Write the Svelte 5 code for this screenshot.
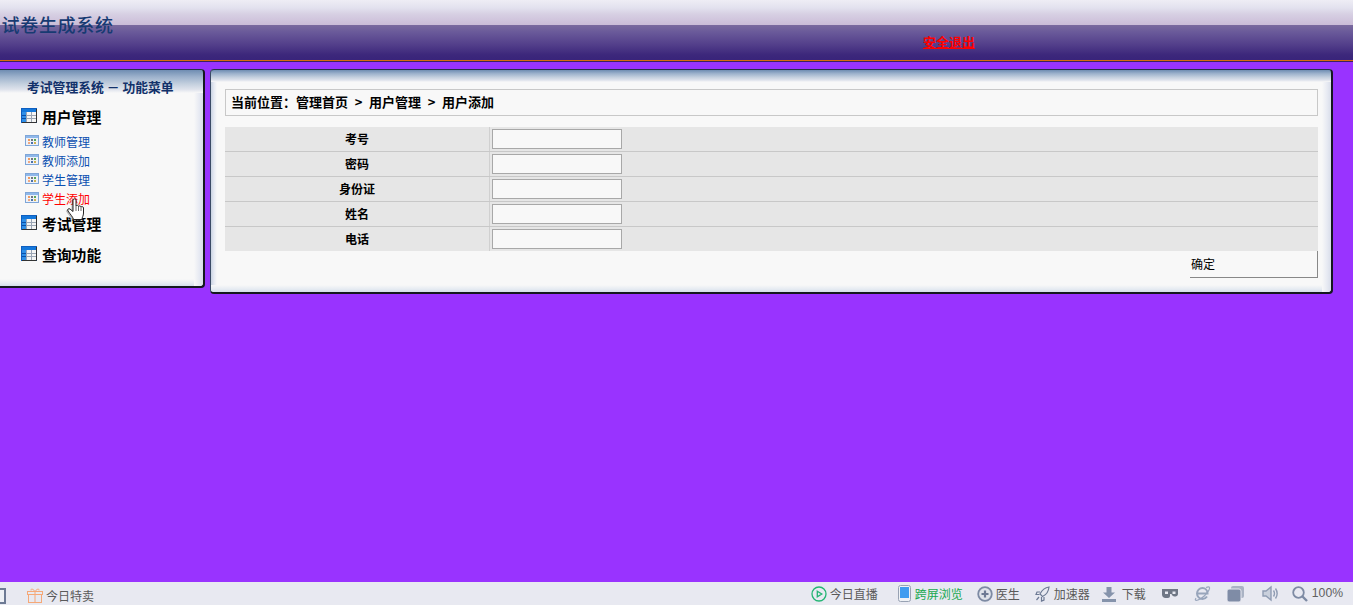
<script>
  const subs = [
    { label: '教师管理' },
    { label: '教师添加' },
    { label: '学生管理' },
    { label: '学生添加', active: true }
  ];
  const fields = ['考号', '密码', '身份证', '姓名', '电话'];
</script>

{#snippet bigIcon()}
  <svg class="big-icon" width="16" height="15" viewBox="0 0 16 15">
    <rect x="0.5" y="0.5" width="15" height="14" fill="#f4f4f4" stroke="#0f5fc0" />
    <rect x="1" y="1" width="14" height="3" fill="#1478dc" />
    <rect x="1" y="4" width="4" height="10" fill="#2f8fe8" />
    <path d="M1 7.5H15M1 10.5H15M5.5 4V14M10.5 4V14" stroke="#9aa5b5" stroke-width="1" />
    <path d="M1 7.5H5M1 10.5H5" stroke="#0b4fa8" stroke-width="1" />
    <path d="M15.5 1V14.5H1" stroke="#333" fill="none" />
  </svg>
{/snippet}

{#snippet smallIcon()}
  <svg class="small-icon" width="14" height="11" viewBox="0 0 14 11">
    <rect x="0.5" y="0.5" width="13" height="10" fill="#eef2f8" stroke="#7fa6d8" />
    <rect x="1" y="1" width="12" height="2" fill="#8fb8ea" />
    <rect x="3" y="4" width="2" height="2" fill="#f09a60" />
    <rect x="6" y="4" width="2" height="2" fill="#70757e" />
    <rect x="9" y="4" width="2" height="2" fill="#58a858" />
    <rect x="3" y="7" width="2" height="2" fill="#f0a880" />
    <rect x="6" y="7" width="2" height="2" fill="#4a70a8" />
    <rect x="9" y="7" width="2" height="2" fill="#d0b050" />
  </svg>
{/snippet}

<div class="page">
  <header class="top">
    <div class="title">试卷生成系统</div>
    <a class="logout" href="#logout">安全退出</a>
  </header>

  <main class="main">
    <aside class="panel side">
      <div class="side-title">考试管理系统 － 功能菜单</div>

      <div class="group">{@render bigIcon()}<span>用户管理</span></div>
      <ul class="subs">
        {#each subs as s}
          <li class:active={s.active}>{@render smallIcon()}<span>{s.label}</span></li>
        {/each}
      </ul>
      <div class="group second">{@render bigIcon()}<span>考试管理</span></div>
      <div class="group third">{@render bigIcon()}<span>查询功能</span></div>

      <svg class="hand" width="17" height="22" viewBox="0 0 17 22">
        <path d="M6 2C6 .5 9 .5 9 2V8C9.500 7 11.500 7 11.500 8.500C12 7.500 14 7.800 14 9C14.500 8.200 16.500 8.500 16.500 10V15C16.500 18 15 19 15 21.500H6.500C6 19 3 16 1 13C0 11.500 1.500 10 3 11L6 13.500Z" fill="#fff" stroke="#222" stroke-width="1" />
        <path d="M9 8V13M11.500 8.500V13M14 9V13" stroke="#444" stroke-width=".8" />
      </svg>
    </aside>

    <section class="panel content">
      <div class="crumb">当前位置：管理首页<span class="sep">&gt;</span>用户管理<span class="sep">&gt;</span>用户添加</div>
      <div class="rows">
        {#each fields as f}
          <div class="row">
            <div class="label">{f}</div>
            <div class="value"><input type="text" /></div>
          </div>
        {/each}
      </div>
      <div class="actions"><button type="button">确定</button></div>
    </section>
  </main>

  <footer class="status">
    <div class="left">
      <span class="stub"></span>
      <svg class="gift" width="16" height="15" viewBox="0 0 16 15" fill="none" stroke="#f5a878">
        <rect x="1.500" y="6.500" width="13" height="8" />
        <rect x=".5" y="3.500" width="15" height="3" />
        <path d="M8 3.500V14.500M8 3.500C6 .5 3.500 .5 4 2.500M8 3.500C10 .5 12.500 .5 12 2.500" />
      </svg>
      <span class="s-text">今日特卖</span>
    </div>
    <div class="right">
      <span class="item i1">
        <svg width="16" height="16" viewBox="0 0 16 16" fill="none" stroke="#22b573" stroke-width="1.300">
          <circle cx="8" cy="8" r="7" />
          <path d="M6.300 5.200L10.800 8L6.300 10.800Z" />
        </svg>
        <span>今日直播</span>
      </span>
      <span class="item i2">
        <svg width="13" height="17" viewBox="0 0 13 17">
          <rect x=".5" y=".5" width="12" height="16" rx="2" fill="#eef1f5" stroke="#98a2b3" />
          <rect x="2" y="2" width="9" height="11" fill="#3f9cf0" />
        </svg>
        <span class="green">跨屏浏览</span>
      </span>
      <span class="item i3">
        <svg width="16" height="16" viewBox="0 0 16 16">
          <circle cx="8" cy="8" r="6.800" fill="#dfe3ea" stroke="#7d8aa3" stroke-width="1.800" />
          <path d="M8 4.500V11.500M4.500 8H11.500" stroke="#6d7a94" stroke-width="2.200" />
        </svg>
        <span>医生</span>
      </span>
      <span class="item i4">
        <svg width="15" height="16" viewBox="0 0 15 16" fill="none" stroke="#6d7a94" stroke-width="1.200">
          <path d="M14 1C10 1.500 7 4 5 8L7.500 10.500C11 9 13.500 6 14 1Z" />
          <path d="M5 6H2L1 8.500H4.500M9 11V14L6.500 15V11M4 11L1.500 14" />
        </svg>
        <span>加速器</span>
      </span>
      <span class="item i5">
        <svg width="16" height="16" viewBox="0 0 16 16" fill="#8593ab">
          <path d="M5.500 1H10.500V6.500H14L8 12L2 6.500H5.500Z" />
          <rect x="1" y="13" width="14" height="3" />
        </svg>
        <span>下载</span>
      </span>
      <svg class="ic i6" width="16" height="11" viewBox="0 0 16 11" fill="#6f7785">
        <path d="M0 1H16V6C16 8 14 8.500 12.500 8.500C11 8.500 10 7.500 9.500 6H8V8C8 10 6 10 5 10H3.500C1.500 10 0 8.500 0 6.500Z" />
        <rect x="3" y="3.500" width="3" height="2.500" fill="#e8e9f1" />
        <rect x="10.500" y="3.500" width="3" height="2.500" fill="#e8e9f1" />
      </svg>
      <svg class="ic i7" width="17" height="17" viewBox="0 0 17 17" fill="none" stroke="#98a5bb" stroke-width="2">
        <path d="M3 8.500H13.500C13.500 5 11 3 8.500 3C5.500 3 3 5.500 3 8.500C3 11.500 5.500 14 8.500 14C10.500 14 12 13 13 11.500" />
        <path d="M2 13C.5 15 1.500 16 4 15C8 13.500 13 9 15 5C16.500 2 15 1 12 2.500" stroke-width="1.200" />
      </svg>
      <svg class="ic i8" width="17" height="16" viewBox="0 0 17 16">
        <rect x="4" y="0" width="13" height="12" rx="2" fill="#aab3c4" />
        <rect x="0" y="3" width="14" height="13" rx="2" fill="#7f8ca6" stroke="#e8e9f1" />
      </svg>
      <svg class="ic i9" width="16" height="17" viewBox="0 0 16 17" fill="none" stroke="#8f9cb3" stroke-width="1.400">
        <path d="M1 6V11H4L9 15V2L4 6Z" fill="#c9d0dc" />
        <path d="M11.500 5.500C12.800 7.500 12.800 9.500 11.500 11.500M13.500 3.500C15.500 6.500 15.500 10.500 13.500 13.500" />
      </svg>
      <span class="item i10">
        <svg width="16" height="16" viewBox="0 0 16 16" fill="none" stroke="#7d8aa3" stroke-width="1.800">
          <circle cx="6.500" cy="6.500" r="5.300" />
          <path d="M10.500 10.500L15 15" stroke-width="2.400" />
        </svg>
        <span class="zoom">100%</span>
      </span>
    </div>
  </footer>
</div>

<style>
  :global(body) {
    margin: 0;
    background: #9933ff;
  }
  .page {
    height: 605px;
    display: flex;
    flex-direction: column;
    overflow: hidden;
    font-family: "Noto Sans CJK SC", "Liberation Sans", sans-serif;
    font-size: 12px;
    line-height: 1;
    color: #000;
    background: #9933ff;
  }

  .top {
    height: 60px;
    box-sizing: content-box;
    border-bottom: 1px solid #d96a10;
    box-shadow: 0 1px 0 #3a2360;
    background: linear-gradient(
      180deg,
      #eeedf5 0,
      #e2e1ee 8px,
      #d7d0e3 14px,
      #cbbdd8 24.500px,
      #7a6a9e 25px,
      #6a5a9a 32px,
      #54408b 44px,
      #3c277b 55px,
      #39247a 60px
    );
  }
  .title {
    padding: 14px 0 0 1.500px;
    height: 20px;
    font-size: 18px;
    line-height: 20px;
    letter-spacing: 0.7px;
    font-weight: 500;
    color: #173a72;
  }
  .logout {
    display: block;
    width: 54px;
    margin: 0 0 0 923px;
    font-size: 13px;
    line-height: 15px;
    font-weight: 700;
    color: #f00;
    text-decoration: underline;
  }

  .main {
    flex: 1;
    min-height: 0;
    display: flex;
    align-items: flex-start;
    gap: 5px;
    padding-top: 8px;
  }
  .panel {
    position: relative;
    box-sizing: border-box;
    background:
      linear-gradient(180deg, #6f8db2 0, #9db2cc 30%, #c3cfde 60%, #dfe3ec 85%, #f8f8f8 100%) top / 100% var(--band) no-repeat,
      linear-gradient(90deg, #f8f8f8 0, #e6e9f2 60%, #d8dde9 100%) right / 9px 100% no-repeat,
      linear-gradient(180deg, #f8f8f8 0, #e6ebf2 60%, #d4deea 100%) bottom / 100% 7px no-repeat,
      linear-gradient(90deg, #c9d3e2 0, #e6e9f2 50%, #f8f8f8 100%) left / var(--edge) 100% no-repeat,
      #f8f8f8;
    border-top: 1px solid #26324a;
    border-right: 2px solid #14181f;
    border-bottom: 2px solid #14181f;
    border-radius: 4px;
  }

  .side {
    --band: 23px;
    --edge: 0px;
    width: 205px;
    height: 219px;
    border-top-left-radius: 0;
    border-bottom-left-radius: 0;
  }
  .side-title {
    padding: 9px 0 0 27px;
    height: 15px;
    font-size: 12.800px;
    line-height: 15px;
    font-weight: 700;
    color: #12316a;
  }
  .group {
    display: flex;
    align-items: center;
    gap: 5px;
    margin: 12px 0 0 21px;
    height: 22px;
    font-size: 14.800px;
    font-weight: 700;
    color: #000;
  }
  .big-icon {
    flex: none;
    margin-top: -3px;
  }
  .group.second {
    margin-top: 5px;
  }
  .group.third {
    margin-top: 9px;
  }
  .subs {
    list-style: none;
    margin: 4px 0 0 25px;
    padding: 0;
  }
  .subs li {
    display: flex;
    align-items: center;
    gap: 3px;
    height: 19px;
    color: #0a4fb0;
  }
  .subs li.active {
    color: #f00;
  }
  .small-icon {
    flex: none;
    margin-top: -2px;
  }
  .hand {
    position: absolute;
    left: 67px;
    top: 128px;
    filter: drop-shadow(-1px 1px 0 rgba(0, 0, 0, 0.25));
  }

  .content {
    --band: 12px;
    --edge: 6px;
    width: 1123px;
    height: 225px;
    padding: 19px 0 0 14px;
    border-left: 1px solid #3a4a66;
  }
  .crumb {
    width: 1093px;
    height: 27px;
    box-sizing: border-box;
    border: 1px solid #c8c8c8;
    padding-left: 5px;
    font-size: 13px;
    line-height: 24px;
    font-weight: 700;
    white-space: nowrap;
  }
  .sep {
    display: inline-block;
    width: 21px;
    text-align: center;
  }
  .rows {
    width: 1093px;
    margin-top: 11px;
    background: #e6e6e6;
  }
  .row {
    display: flex;
    height: 25px;
    box-sizing: border-box;
    border-bottom: 1px solid #c8c8c8;
  }
  .row:last-child {
    height: 24px;
    border-bottom: 0;
  }
  .label {
    width: 264px;
    border-right: 1px solid #d0d0d0;
    box-sizing: content-box;
    text-align: center;
    line-height: 24px;
    font-weight: 700;
  }
  .value {
    padding: 2px 0 0 2px;
  }
  .value input {
    display: block;
    width: 130px;
    height: 20px;
    box-sizing: border-box;
    margin: 0;
    padding: 0;
    background: #f8f8f8;
    border: 1px solid #a8a8a8;
    border-radius: 0;
  }
  .actions {
    width: 1093px;
    display: flex;
    justify-content: flex-end;
  }
  .actions button {
    width: 128px;
    height: 27px;
    box-sizing: border-box;
    margin: 0;
    padding: 0 0 0 1px;
    background: #f8f8f8;
    border: 0;
    border-right: 1px solid #888;
    border-bottom: 1px solid #888;
    border-radius: 0;
    font: inherit;
    font-size: 12px;
    line-height: 26px;
    color: #000;
    text-align: left;
  }

  .status {
    position: relative;
    height: 23px;
    flex: none;
    display: flex;
    justify-content: space-between;
    background: #e8e9f1;
    color: #5a5a5a;
    white-space: nowrap;
  }
  .left,
  .right {
    display: flex;
    align-items: center;
  }
  .stub {
    width: 4px;
    height: 12px;
    margin-top: 4px;
    border: 2px solid #6d7a94;
    border-left: 0;
    background: #eef0f5;
  }
  .gift {
    margin: 3px 0 0 21px;
  }
  .s-text {
    margin: 4px 0 0 3px;
  }
  .item {
    display: flex;
    align-items: center;
    gap: 3px;
  }
  .green {
    color: #18a84f;
  }
  .zoom {
    color: #606060;
    font-family: "Liberation Sans", sans-serif;
    font-size: 12.200px;
    margin-left: 1px;
  }
  .i2 { margin-left: 20px; gap: 4px; }
  .i3 { margin-left: 14px; }
  .i4 { margin-left: 15px; gap: 4px; }
  .i5 { margin-left: 11px; gap: 5px; }
  .i6 { margin-left: 16px; }
  .i7 { margin-left: 16px; }
  .i8 { margin-left: 16px; }
  .i9 { margin-left: 18px; }
  .i10 { margin-left: 14px; margin-right: 10px; gap: 3px; }
</style>
